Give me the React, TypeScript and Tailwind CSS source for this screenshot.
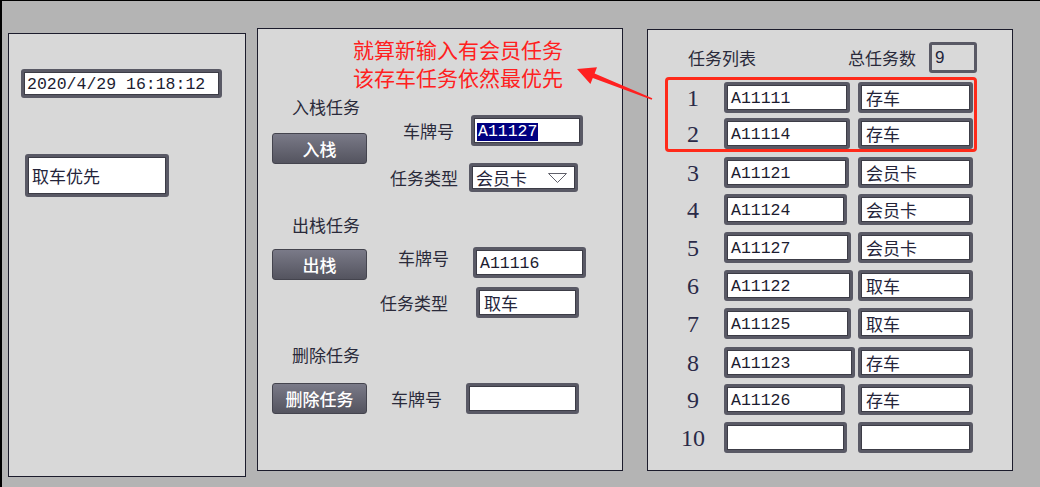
import type { ReactNode } from 'react';

const cjk = "font-['Noto_Sans_CJK_SC',sans-serif]";
const mono = "font-['Liberation_Mono','Noto_Sans_CJK_SC',monospace]";

function Field({ className = '', children }: { className?: string; children?: ReactNode }) {
  return (
    <div
      className={`h-[31px] flex items-center border-[3px] border-[#595965] rounded-[3px] bg-white shadow-[inset_0_0_0_1px_#3c3c46] ${className}`}
    >
      {children}
    </div>
  );
}

function Button({ label }: { label: string }) {
  return (
    <div
      className={`w-[95px] h-[31px] flex items-center justify-center rounded-[3px] border border-[#44444e] bg-gradient-to-b from-[#7a7a88] to-[#54545f] text-white text-[17px] font-medium ${cjk}`}
    >
      {label}
    </div>
  );
}

function Label({ children, className = '' }: { children: ReactNode; className?: string }) {
  return <span className={`text-[17px] leading-[20px] text-[#2a2a3a] ${cjk} ${className}`}>{children}</span>;
}

function Code({ children, className = '' }: { children: ReactNode; className?: string }) {
  return (
    <span className={`text-[16.5px] leading-[20px] translate-y-[1px] text-[#1c1c30] ${mono} ${className}`}>
      {children}
    </span>
  );
}

const tasks = [
  { n: 1, code: 'A11111', type: '存车', w: 'w-[126px]', mt: 'mt-[2px]' },
  { n: 2, code: 'A11114', type: '存车', w: 'w-[126px]', mt: 'mt-[5px]' },
  { n: 3, code: 'A11121', type: '会员卡', w: 'w-[125px]', mt: 'mt-[5px]' },
  { n: 4, code: 'A11124', type: '会员卡', w: 'w-[123px]', mt: 'mt-[6px]' },
  { n: 5, code: 'A11127', type: '会员卡', w: 'w-[127px]', mt: 'mt-[7px]' },
  { n: 6, code: 'A11122', type: '取车', w: 'w-[129px]', mt: 'mt-[7px]' },
  { n: 7, code: 'A11125', type: '取车', w: 'w-[127px]', mt: 'mt-[7px]' },
  { n: 8, code: 'A11123', type: '存车', w: 'w-[131px]', mt: 'mt-[8px]' },
  { n: 9, code: 'A11126', type: '存车', w: 'w-[121px]', mt: 'mt-[6px]' },
  { n: 10, code: '', type: '', w: 'w-[123px]', mt: 'mt-[7px]' },
];

function TaskRow({ task, inner }: { task: (typeof tasks)[number]; inner?: boolean }) {
  return (
    <div className={`flex items-center h-[31px] ${task.mt}`}>
      <div
        className={`${inner ? 'w-[50px] ml-[0px]' : 'w-[50px] ml-[20px]'} text-center text-[24px] leading-none text-[#2a2a48] font-['Liberation_Serif',serif]`}
      >
        {task.n}
      </div>
      <div className="w-[134px] ml-[6px]">
        <Field className={task.w}>
          <Code className="pl-[4px]">{task.code}</Code>
        </Field>
      </div>
      <Field className="w-[115px]">
        <span className={`pl-[5px] text-[17px] text-[#24243a] ${cjk}`}>{task.type}</span>
      </Field>
    </div>
  );
}

export default function App() {
  return (
    <div className="relative w-[1040px] h-[487px] overflow-hidden flex items-start bg-[#b4b4b4] border-t border-l-2 border-black">
      {/* Left panel */}
      <div className="ml-[6px] mt-[32px] w-[238px] h-[444px] border border-[#1c1c2c] bg-[#d8d8d8] flex flex-col items-start">
        <Field className="ml-[12px] mt-[35px] w-[201px] !h-[29px]">
          <Code className="pl-[3px]">2020/4/29 16:18:12</Code>
        </Field>
        <Field className="ml-[16px] mt-[56px] w-[144px] !h-[43px]">
          <span className={`pl-[4px] text-[17px] text-[#24243a] ${cjk}`}>取车优先</span>
        </Field>
      </div>

      {/* Middle panel */}
      <div className="ml-[11px] mt-[27px] w-[366px] h-[443px] border border-[#1c1c2c] bg-[#d8d8d8] flex flex-col">
        <div className={`mt-[6px] pl-[95px] text-[21px] leading-[28px] text-[#ff2020] ${cjk}`}>
          <div>就算新输入有会员任务</div>
          <div>该存车任务依然最优先</div>
        </div>

        {/* 入栈 */}
        <div className="mt-[6px] flex items-start">
          <div className="ml-[14px] flex flex-col items-start">
            <Label className="ml-[20px]">入栈任务</Label>
            <div className="mt-[16px]">
              <Button label="入栈" />
            </div>
          </div>
          <div className="flex flex-col">
            <div className="mt-[18px] flex items-center">
              <Label className="ml-[36px]">车牌号</Label>
              <Field className="ml-[17px] w-[112px]">
                <Code className="ml-[3px] px-[1px] !leading-[18px] bg-[#000080] !text-white">A11127</Code>
              </Field>
            </div>
            <div className="mt-[17px] flex items-center">
              <Label className="ml-[23px]">任务类型</Label>
              <Field className="ml-[11px] w-[109px] !h-[29px] justify-between">
                <span className={`pl-[4px] text-[17px] text-[#24243a] ${cjk}`}>会员卡</span>
                <svg width="19" height="10" viewBox="0 0 19 10" className="mr-[8px]">
                  <path d="M0.5 0.5 L18.5 0.5 L9.5 9.5 Z" fill="none" stroke="#60606a" strokeWidth="1" />
                </svg>
              </Field>
            </div>
          </div>
        </div>

        {/* 出栈 */}
        <div className="mt-[23px] flex items-start">
          <div className="ml-[14px] flex flex-col items-start">
            <Label className="ml-[20px]">出栈任务</Label>
            <div className="mt-[14px]">
              <Button label="出栈" />
            </div>
          </div>
          <div className="flex flex-col">
            <div className="mt-[32px] flex items-center">
              <Label className="ml-[31px] mb-[10px]">车牌号</Label>
              <Field className="ml-[24px] w-[113px]">
                <Code className="pl-[4px]">A11116</Code>
              </Field>
            </div>
            <div className="mt-[9px] flex items-center">
              <Label className="ml-[13px]">任务类型</Label>
              <Field className="ml-[28px] w-[103px]">
                <span className={`pl-[5px] text-[17px] text-[#24243a] ${cjk}`}>取车</span>
              </Field>
            </div>
          </div>
        </div>

        {/* 删除 */}
        <div className="mt-[27px] flex items-start">
          <div className="ml-[14px] flex flex-col items-start">
            <Label className="ml-[20px]">删除任务</Label>
            <div className="mt-[18px]">
              <Button label="删除任务" />
            </div>
          </div>
          <div className="mt-[38px] flex items-center">
            <Label className="ml-[24px]">车牌号</Label>
            <Field className="ml-[24px] w-[113px]" />
          </div>
        </div>
      </div>

      {/* Right panel */}
      <div className="ml-[24px] mt-[28px] w-[366px] h-[442px] border border-[#1c1c2c] bg-[#d8d8d8] flex flex-col">
        <div className="mt-[12px] h-[31px] flex items-center">
          <Label className="ml-[40px]">任务列表</Label>
          <Label className="ml-[92px]">总任务数</Label>
          <div className="ml-[13px] w-[48px] h-[31px] flex items-center border-[3px] border-[#595965] rounded-[3px] bg-[#d9d9d9]">
            <span className="pl-[3px] text-[17px] text-[#24243a] font-['Liberation_Sans',sans-serif]">9</span>
          </div>
        </div>

        <div className="ml-[17px] mt-[4px] w-[312px] border-[3px] border-[#ff2a1a] rounded-[4px]">
          <TaskRow task={tasks[0]} inner />
          <TaskRow task={tasks[1]} inner />
        </div>
        {tasks.slice(2).map((t) => (
          <TaskRow key={t.n} task={t} />
        ))}
      </div>

      {/* Annotation arrow */}
      <svg className="absolute left-0 top-0 pointer-events-none" width="1040" height="487">
        <polygon
          points="575,68 595,66.3 592.6,72.4 650.3,97.3 649.7,98.7 590.8,77 588.4,83.1"
          fill="#ff2020"
        />
      </svg>
    </div>
  );
}
